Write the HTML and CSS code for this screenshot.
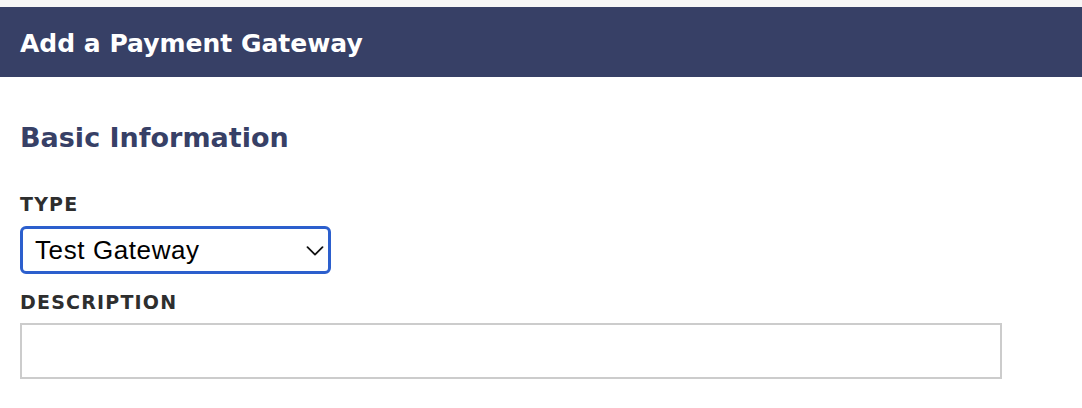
FILE: index.html
```html
<!DOCTYPE html>
<html>
<head>
<meta charset="utf-8">
<link rel="stylesheet" href="styles.css">
</head>
<body>
<div class="page">
  <header class="bar"><h1 class="bar-title">Add a Payment Gateway</h1></header>
  <main class="content">
    <h2 class="section-title">Basic Information</h2>
    <div class="field">
      <label class="field-label">TYPE</label>
      <div class="select">
        <span class="select-value">Test Gateway</span>
        <svg class="chev" width="18" height="10" viewBox="0 0 18 10"><path d="M1.5 1.2 L9 8.6 L16.5 1.2" fill="none" stroke="#111" stroke-width="1.8" stroke-linecap="round" stroke-linejoin="round"/></svg>
      </div>
    </div>
    <div class="field">
      <label class="field-label">DESCRIPTION</label>
      <div class="input"></div>
    </div>
  </main>
</div>
</body>
</html>
```
FILE: styles.css
```css
html, body { margin: 0; padding: 0; background: #fff; }
body { font-family: "DejaVu Sans", Verdana, sans-serif; }
.page { border-top: 7px solid #f6f6f6; }
.bar { box-sizing: border-box; background: #374066; height: 70px; display: flex; align-items: center; padding: 4px 0 0 20px; }
.bar-title { margin: 0; color: #fff; font-size: 25px; font-weight: bold; line-height: 30px; }
.content { padding: 45px 20px 0 20px; }
.section-title { margin: 0 0 39px 0; color: #374066; font-size: 27px; font-weight: bold; line-height: 32px; }
.field { display: flex; flex-direction: column; align-items: flex-start; }
.field-label { color: #2e2e2e; font-size: 19px; font-weight: bold; line-height: 22px; letter-spacing: 1.2px; margin-bottom: 10px; }
.select { box-sizing: border-box; width: 311px; height: 48px; border: 3px solid #2c5fcd; border-radius: 6px; display: flex; align-items: center; justify-content: space-between; padding: 0 4px 0 12px; margin-top: 1px; margin-bottom: 17px; }
.select-value { font-family: "Liberation Sans", Arial, sans-serif; font-size: 26px; line-height: 30px; letter-spacing: 0.6px; color: #000; }
.chev { display: block; margin-top: 1px; }
.input { box-sizing: border-box; width: 982px; height: 56px; border: 2px solid #cccccc; background: #fff; }
```
